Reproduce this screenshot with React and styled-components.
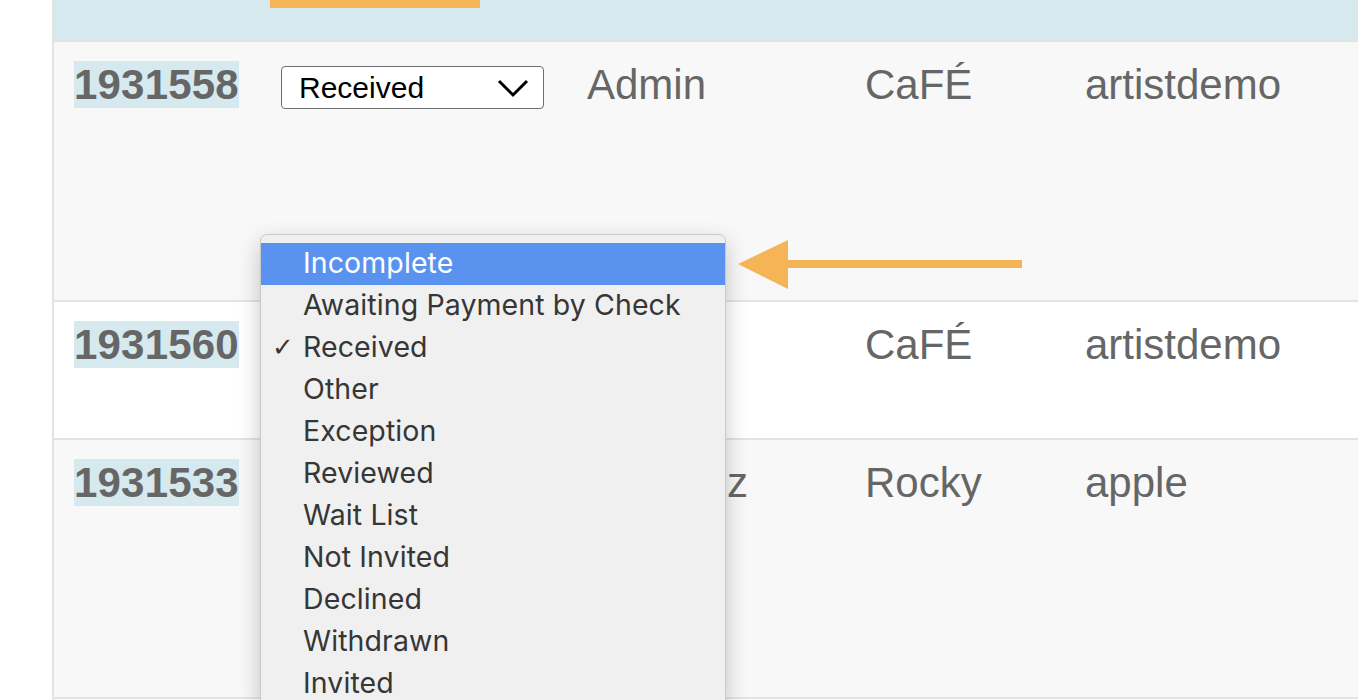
import React from 'react';
import styled, { createGlobalStyle } from 'styled-components';

const GlobalStyle = createGlobalStyle`
  html, body {
    margin: 0;
    padding: 0;
    background: #ffffff;
    overflow: hidden;
  }
  body {
    font-family: "Liberation Sans", Arial, sans-serif;
  }
`;

const COLS = '207px 306px 278px 220px 1fr';
const ORANGE = '#f5b556';

const Page = styled.div`
  width: 1358px;
  height: 700px;
  padding-left: 52px;
  box-sizing: border-box;
`;

const Table = styled.div`
  position: relative;
  border-left: 2px solid #e4e4df;
  height: 700px;
`;

const Header = styled.div`
  display: grid;
  grid-template-columns: ${COLS};
  height: 40px;
  background: #d5e9ef;
  border-bottom: 2px solid #e4e4df;
`;

const ActiveTab = styled.div`
  grid-column: 2;
  margin-left: 9px;
  width: 210px;
  height: 8px;
  background: ${ORANGE};
`;

const Row = styled.div`
  display: grid;
  grid-template-columns: ${COLS};
  height: ${p => p.$height}px;
  background: ${p => (p.$striped ? '#f8f8f8' : '#ffffff')};
  border-bottom: 2px solid #e4e4df;
`;

const Cell = styled.div`
  position: relative;
  padding: 20px 0 0 20px;
  font-size: 42px;
  line-height: 46px;
  color: #666666;
  white-space: nowrap;
`;

const Id = styled.span`
  font-weight: bold;
  background: #d5e9ef;
  letter-spacing: 0.2px;
`;

const Select = styled.div`
  display: flex;
  align-items: center;
  justify-content: space-between;
  box-sizing: border-box;
  width: 263px;
  height: 43px;
  margin-top: 4px;
  padding: 0 14px 0 17px;
  border: 1.5px solid #6e6e6e;
  border-radius: 4px;
  background: #ffffff;
  color: #000000;
  font-size: 30px;
  line-height: 30px;
`;

const Menu = styled.ul`
  position: absolute;
  left: -1px;
  top: 192px;
  width: 464px;
  margin: 0;
  padding: 8px 0 0;
  list-style: none;
  background: #f0f0f0;
  border: 1px solid #c9c9c9;
  border-radius: 7px;
  box-shadow: 0 8px 22px rgba(0, 0, 0, 0.22);
  z-index: 2;
  font-family: Inter, "Noto Sans", sans-serif;
  font-size: 28.5px;
  letter-spacing: 0.1px;
`;

const Option = styled.li`
  position: relative;
  height: 42px;
  line-height: 40px;
  padding-left: 42px;
  color: ${p => (p.$active ? '#ffffff' : '#363636')};
  background: ${p => (p.$active ? '#5a93ef' : 'transparent')};
`;

const Check = styled.span`
  position: absolute;
  left: 11px;
  top: 0;
  font-size: 26px;
  font-family: "DejaVu Sans", sans-serif;
  color: #363636;
`;

const Arrow = styled.svg`
  position: absolute;
  left: 684px;
  top: 240px;
  z-index: 3;
`;

const Chevron = () => (
  <svg width="32" height="20" viewBox="0 0 32 20">
    <polyline points="2,3 16,17 30,3" fill="none" stroke="#000" strokeWidth="3" strokeLinejoin="miter" />
  </svg>
);

const OPTIONS = [
  'Incomplete',
  'Awaiting Payment by Check',
  'Received',
  'Other',
  'Exception',
  'Reviewed',
  'Wait List',
  'Not Invited',
  'Declined',
  'Withdrawn',
  'Invited',
];

// rows 2 and 3 have their status and name hidden under the open menu
const rows = [
  { id: '1931558', name: 'Admin', event: 'CaFÉ', owner: 'artistdemo', height: 258, striped: true, open: true, select: true },
  { id: '1931560', name: '', event: 'CaFÉ', owner: 'artistdemo', height: 136, striped: false },
  { id: '1931533', name: 'Martinez', event: 'Rocky', owner: 'apple', height: 257, striped: true },
];

const StatusSelect = ({ open }) => (
  <>
    <Select>
      <span>Received</span>
      <Chevron />
    </Select>
    {open && (
      <Menu>
        {OPTIONS.map((opt, i) => (
          <Option key={opt} $active={i === 0}>
            {opt === 'Received' && <Check>✓</Check>}
            {opt}
          </Option>
        ))}
      </Menu>
    )}
  </>
);

export default function App() {
  return (
    <Page>
      <GlobalStyle />
      <Table>
        <Header>
          <ActiveTab />
        </Header>
        {rows.map(row => (
          <Row key={row.id} $height={row.height} $striped={row.striped}>
            <Cell>
              <Id>{row.id}</Id>
            </Cell>
            <Cell>{row.select && <StatusSelect open={row.open} />}</Cell>
            <Cell>{row.name}</Cell>
            <Cell>{row.event}</Cell>
            <Cell>{row.owner}</Cell>
          </Row>
        ))}
        <Arrow width="286" height="50" viewBox="0 0 286 50">
          <polygon points="0,24 50,0 50,49" fill={ORANGE} />
          <rect x="48" y="20" width="236" height="8" fill={ORANGE} />
        </Arrow>
      </Table>
    </Page>
  );
}
